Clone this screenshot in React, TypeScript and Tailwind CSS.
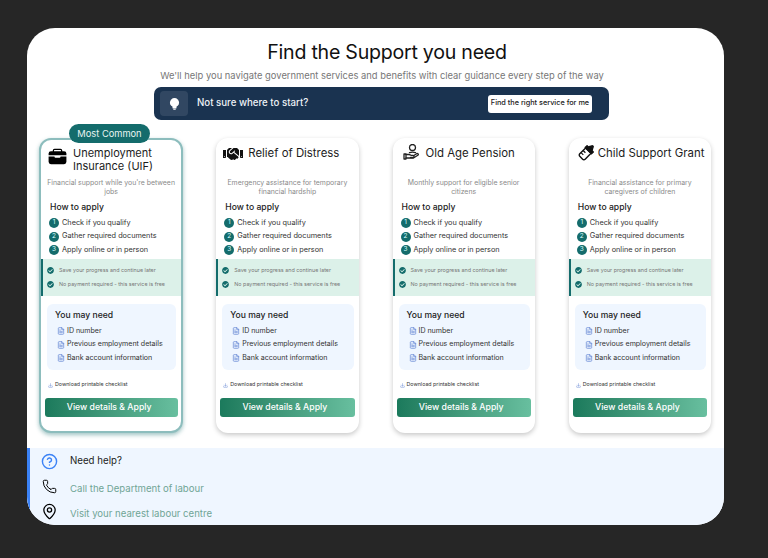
import { FileText, Download, Phone, MapPin, CircleHelp } from "lucide-react";
import { FaHandshake, FaCheckCircle } from "react-icons/fa";
import { IoBriefcase } from "react-icons/io5";
import type { ReactNode } from "react";

const PensionIcon = () => (
  <svg viewBox="0 0 16 16" className="-mt-[3px] h-[16px] w-[16px]" fill="none" stroke="#222" strokeWidth="1.300" strokeLinecap="round" strokeLinejoin="round">
    <circle cx="9.500" cy="3.500" r="3" />
    <path d="M1 10h2v5H1z" />
    <path d="M3 10.500h3c.8 0 1.400.8 2.200.8h1.800a1 1 0 0 1 0 2.200H7.500" />
    <path d="M3 14h7.500l4.700-3c.5-1-.6-1.800-1.600-1.300l-2.800 1.800" />
    <path d="M6.500 8.700c1.500-.6 4.500-.6 6 0" />
  </svg>
);

const BottleIcon = () => (
  <svg viewBox="0 0 16 16" className="-mt-[5px] -mr-[1px] -ml-[2px] h-[19px] w-[19px]" fill="none" stroke="#111" strokeWidth="1.200" strokeLinejoin="round">
    <g transform="rotate(45 8 8)">
      <path d="M4.800 7h6.400v7a1.500 1.500 0 0 1-1.500 1.500H6.300A1.500 1.500 0 0 1 4.800 14z" fill="#fff" />
      <path d="M4.300 4.800h7.400V7H4.300z" fill="#111" />
      <path d="M6 4.800c0-1 1-1.500 1.200-2.600.1-.8 1.500-.8 1.600 0 .2 1.100 1.200 1.600 1.200 2.600z" fill="#111" />
      <path d="M4.800 10h2.700M4.800 12.500h2.700" strokeWidth="1" />
    </g>
  </svg>
);

const BulbIcon = () => (
  <svg viewBox="0 0 12 13" className="h-[12px] w-[11px]" fill="#fff">
    <circle cx="6" cy="5" r="5" />
    <path d="M3.800 9h4.400v1.500a1 1 0 0 1-1 1H4.800a1 1 0 0 1-1-1z" />
    <rect x="4.500" y="11.800" width="3" height="1" rx=".5" />
  </svg>
);

type Service = {
  title: ReactNode;
  desc: string;
  icon: ReactNode;
  headGap: string;
  featured?: boolean;
};

const services: Service[] = [
  {
    title: (
      <>
        Unemployment
        <br />
        Insurance (UIF)
      </>
    ),
    desc: "Financial support while you're between jobs",
    icon: <IoBriefcase className="h-[19px] w-[19px] text-black" />,
    headGap: "gap-[6px] pl-[7px]",
    featured: true,
  },
  {
    title: "Relief of Distress",
    desc: "Emergency assistance for temporary financial hardship",
    icon: <FaHandshake className="-mt-[3px] h-[20px] w-[20px] text-[#111]" />,
    headGap: "gap-[5px] pl-[7px]",
  },
  {
    title: "Old Age Pension",
    desc: "Monthly support for eligible senior citizens",
    icon: <PensionIcon />,
    headGap: "gap-[7px] pl-[10px]",
  },
  {
    title: "Child Support Grant",
    desc: "Financial assistance for primary caregivers of children",
    icon: <BottleIcon />,
    headGap: "gap-[2px] pl-[11px]",
  },
];

const steps = ["Check if you qualify", "Gather required documents", "Apply online or in person"];
const docs = ["ID number", "Previous employment details", "Bank account information"];
const notes = ["Save your progress and continue later", "No payment required - this service is free"];

const ServiceCard = ({ s }: { s: Service }) => (
  <div
    className={`relative flex h-[295px] flex-col rounded-[12px] bg-white ${
      s.featured
        ? "-mx-[1px] border-2 border-[#8dbdbd] shadow-[0_2px_4px_rgba(20,108,108,0.4)]"
        : "shadow-[0_2px_5px_rgba(0,0,0,0.22)]"
    }`}
  >
    {s.featured && (
      <div className="absolute -top-[16px] left-[28px] flex h-[19px] w-[81px] items-center justify-center rounded-full bg-[#146c6c] text-[9.300px] text-[#e8f4f2]">
        Most Common
      </div>
    )}
    <div className={`flex h-[39px] shrink-0 items-start pt-[9px] ${s.headGap} ${s.featured ? "-mt-[2px]" : ""}`}>
      <span className="shrink-0">{s.icon}</span>
      <h2 className={`leading-[13px] whitespace-nowrap text-[#1c1c1c] ${s.featured ? "text-[11px]" : "text-[11.400px]"}`}>{s.title}</h2>
    </div>
    <p className="mt-[2px] px-[4px] text-center text-[6.900px] leading-[8.500px] text-[#8a8a8a]">{s.desc}</p>
    <h3 className="mt-[5px] pl-[9px] text-[8.600px] leading-[12px] font-medium text-[#1c1c1c]">How to apply</h3>
    <ul className="mt-[5px] flex flex-col gap-[3.500px] pl-[8px]">
      {steps.map((t, i) => (
        <li key={t} className="flex h-[10px] items-center gap-[3px] text-[7.300px] text-[#333]">
          <span className="flex h-[10px] w-[10px] shrink-0 items-center justify-center rounded-full bg-[#146c6c] text-[6.500px] text-[#dff]">{i + 1}</span>
          {t}
        </li>
      ))}
    </ul>
    <div className="mt-[4px] flex h-[37px] shrink-0 flex-col justify-center gap-[6.500px] border-l-2 border-[#146c6c] bg-[#dcf1e9] pl-[4px]">
      {notes.map((t) => (
        <div key={t} className="flex items-center gap-[5px] text-[5.400px] leading-[7px] whitespace-nowrap text-[#777]">
          <FaCheckCircle className="h-[7px] w-[7px] shrink-0 text-[#146c6c]" />
          {t}
        </div>
      ))}
    </div>
    <div className="mt-[8px] mr-[5px] ml-[6px] h-[66px] rounded-[6px] bg-[#eff6ff] pt-[5px] pl-[8px]">
      <h3 className="text-[8.600px] leading-[12px] font-medium text-[#1c1c1c]">You may need</h3>
      <ul className="mt-[5px] flex flex-col gap-[3px]">
        {docs.map((t) => (
          <li key={t} className="flex h-[10.500px] items-center gap-[2px] pl-[2px] text-[7.050px] whitespace-nowrap text-[#333]">
            <FileText className="h-[8px] w-[8px] shrink-0 text-[#5b7fd0]" />
            {t}
          </li>
        ))}
      </ul>
    </div>
    <div className="mt-[11px] flex h-[8px] items-center gap-[2px] pl-[7px] text-[5.300px] text-[#333]">
      <Download className="h-[5px] w-[5px] text-[#5b7fd0]" />
      Download printable checklist
    </div>
    <button className={`mt-[9px] ml-[4px] flex h-[19px] items-center justify-center rounded-[3px] bg-gradient-to-r from-[#1b7a5c] to-[#68bf9f] pr-[5px] text-[8.700px] font-medium text-white ${s.featured ? "mr-[3px]" : "mr-[4px]"}`}>
      View details &amp; Apply
    </button>
  </div>
);

export default function App() {
  return (
    <div className="h-[558px] bg-[#262626] pt-[28px] pl-[27px] font-['Inter','Liberation_Sans',sans-serif]">
      <main className="flex h-[497px] w-[697px] flex-col overflow-hidden rounded-[28px] bg-white">
        <h1 className="mt-[9px] pl-[23px] text-center text-[19.600px] leading-[30px] tracking-[-0.25px] text-[#111]">Find the Support you need</h1>
        <p className="mt-[2px] pl-[13px] text-center text-[9.400px] leading-[14px] text-[#777]">
          We'll help you navigate government services and benefits with clear guidance every step of the way
        </p>
        <section className="mt-[4px] ml-[127px] flex h-[34px] w-[455px] items-center rounded-[7px] bg-[#1a3350] pr-[17px] pl-[6px]">
          <span className="flex h-[25px] w-[28px] items-center justify-center rounded-[4px] bg-white/10">
            <BulbIcon />
          </span>
          <span className="ml-[9px] text-[9.700px] font-medium text-[#eef2f6]">Not sure where to start?</span>
          <button className="ml-auto h-[18px] w-[104px] rounded-[3px] bg-white text-[7.300px] font-medium text-[#222]">
            Find the right service for me
          </button>
        </section>
        <div className="mt-[18px] ml-[13px] grid w-[671px] grid-cols-4 gap-[34px]">
          {services.map((s, i) => (
            <ServiceCard key={i} s={s} />
          ))}
        </div>
        <footer className="mt-[15px] flex-1 border-l-[3px] border-[#3b82f6] bg-[#eff6ff] pl-[11px]">
          <div className="flex h-[25px] items-center gap-[12px]">
            <CircleHelp className="mt-[2px] h-[17px] w-[17px] text-[#3b82f6]" />
            <span className="mt-[1px] text-[9.700px] text-[#222]">Need help?</span>
          </div>
          <div className="mt-[2px] flex h-[25px] items-center gap-[12px]">
            <Phone className="-mt-[3px] h-[15px] w-[17px] text-black" strokeWidth={1.6} />
            <span className="mt-[4px] text-[9.600px] text-[#6fa596]">Call the Department of labour</span>
          </div>
          <div className="flex h-[25px] items-center gap-[12px]">
            <MapPin className="-mt-[3px] h-[17px] w-[17px] text-black" strokeWidth={1.8} />
            <span className="mt-[4px] text-[9.600px] text-[#6fa596]">Visit your nearest labour centre</span>
          </div>
        </footer>
      </main>
    </div>
  );
}
